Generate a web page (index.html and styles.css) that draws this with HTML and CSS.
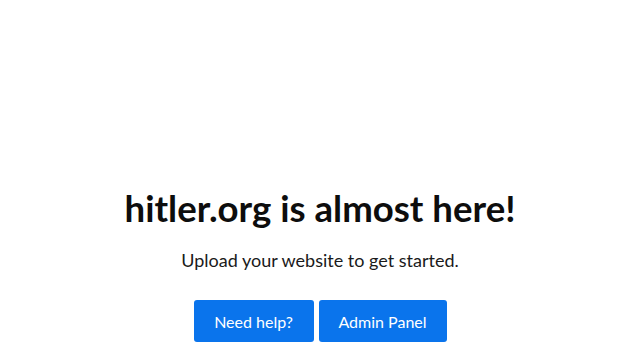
FILE: index.html
```html
<!DOCTYPE html>
<html>
<head>
<meta charset="utf-8">
<link rel="stylesheet" href="styles.css">
</head>
<body>
<main class="wrap">
  <h1 class="title">hitler.org is almost here!</h1>
  <p class="sub">Upload your website to get started.</p>
  <div class="actions">
    <a class="btn btn-help" href="#">Need help?</a>
    <a class="btn btn-admin" href="#">Admin Panel</a>
  </div>
</main>
</body>
</html>
```
FILE: styles.css
```css
html, body {
  margin: 0;
  padding: 0;
  background: #fff;
}
body {
  font-family: Lato, "Noto Sans", sans-serif;
  color: #111;
}
.wrap {
  display: flex;
  flex-direction: column;
  align-items: center;
  padding-top: 186px;
}
.title {
  margin: 0;
  font-size: 36.6px;
  font-weight: 700;
  line-height: 44px;
  color: #0d0d0d;
}
.sub {
  margin: 18px 0 0;
  font-size: 18px;
  line-height: 24px;
  color: #1a1a1a;
}
.actions {
  display: flex;
  gap: 5px;
  margin-top: 28px;
}
.btn {
  display: flex;
  align-items: center;
  justify-content: center;
  height: 42px;
  border-radius: 3px;
  background: #0a74ec;
  color: #fff;
  text-decoration: none;
  font-size: 16px;
}
.btn-help { width: 120px; }
.btn-admin { width: 128px; }
```
